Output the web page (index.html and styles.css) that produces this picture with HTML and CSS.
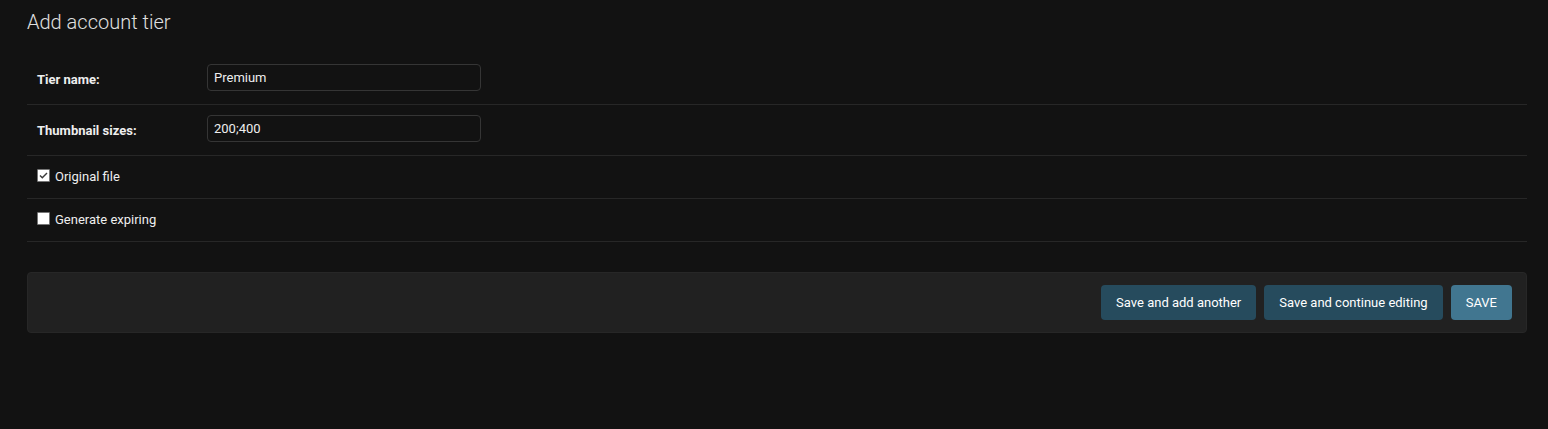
FILE: index.html
```html
<!DOCTYPE html>
<html lang="en">
<head>
<meta charset="utf-8">
<title>Add account tier</title>
<link rel="stylesheet" href="styles.css">
</head>
<body>
<div class="content">
  <h1 class="title">Add account tier</h1>
  <form class="form">
    <fieldset class="module">
      <div class="form-row">
        <label class="field-label required">Tier name:</label>
        <input class="text-field" type="text" value="Premium">
      </div>
      <div class="form-row">
        <label class="field-label required">Thumbnail sizes:</label>
        <input class="text-field" type="text" value="200;400">
      </div>
      <div class="form-row check-row">
        <span class="checkbox"><svg width="11" height="11" viewBox="0 0 11 11"><path d="M2 5.5 L4.3 7.8 L9 3" fill="none" stroke="#3a3a3a" stroke-width="1.4"/></svg></span>
        <label class="check-label">Original file</label>
      </div>
      <div class="form-row check-row">
        <span class="checkbox"></span>
        <label class="check-label">Generate expiring</label>
      </div>
    </fieldset>
    <div class="submit-row">
      <button type="button" class="btn">Save and add another</button>
      <button type="button" class="btn">Save and continue editing</button>
      <button type="button" class="btn btn-default">SAVE</button>
    </div>
  </form>
</div>
</body>
</html>
```

FILE: styles.css
```css
html, body {
  margin: 0;
  padding: 0;
  background: #121212;
  color: #eeeeee;
  font-family: Roboto, "Liberation Sans", sans-serif;
}

.content {
  padding: 10px 21px 20px 27px;
}

.title {
  margin: 0 0 20px;
  font-size: 20px;
  line-height: 24px;
  font-weight: 300;
  color: #e0e0e0;
}

.module {
  border: none;
  margin: 0;
  padding: 0;
  min-width: 0;
}

.form-row {
  display: flex;
  align-items: flex-start;
  padding: 10px 10px 13px;
  border-bottom: 1px solid #272727;
  font-size: 13px;
}

.field-label {
  width: 170px;
  flex: none;
  padding-top: 8px;
  font-weight: bold;
  color: #eeeeee;
}

.text-field {
  box-sizing: border-box;
  width: 274px;
  height: 27px;
  margin: 0;
  padding: 5px 6px;
  border: 1px solid #353535;
  border-radius: 4px;
  background: #121212;
  color: #eeeeee;
  font-family: Roboto, "Liberation Sans", sans-serif;
  font-size: 13px;
  outline: none;
}

.check-row {
  align-items: flex-start;
  padding: 13px 10px 14px;
}

.checkbox {
  box-sizing: border-box;
  width: 13px;
  height: 13px;
  flex: none;
  border: 1px solid #767676;
  border-radius: 1px;
  background: #ffffff;
  display: flex;
  align-items: center;
  justify-content: center;
}

.checkbox svg {
  display: block;
}

.check-label {
  margin-left: 5px;
  line-height: 15px;
  color: #eeeeee;
}

.submit-row {
  margin-top: 30px;
  display: flex;
  justify-content: flex-end;
  gap: 8px;
  padding: 12px 14px;
  background: #212121;
  border: 1px solid #272727;
  border-radius: 4px;
}

.btn {
  height: 35px;
  padding: 0 15px;
  border: none;
  border-radius: 4px;
  background: #264b5d;
  color: #ffffff;
  font-family: Roboto, "Liberation Sans", sans-serif;
  font-size: 13px;
  cursor: pointer;
}

.btn-default {
  background: #417690;
}
```
